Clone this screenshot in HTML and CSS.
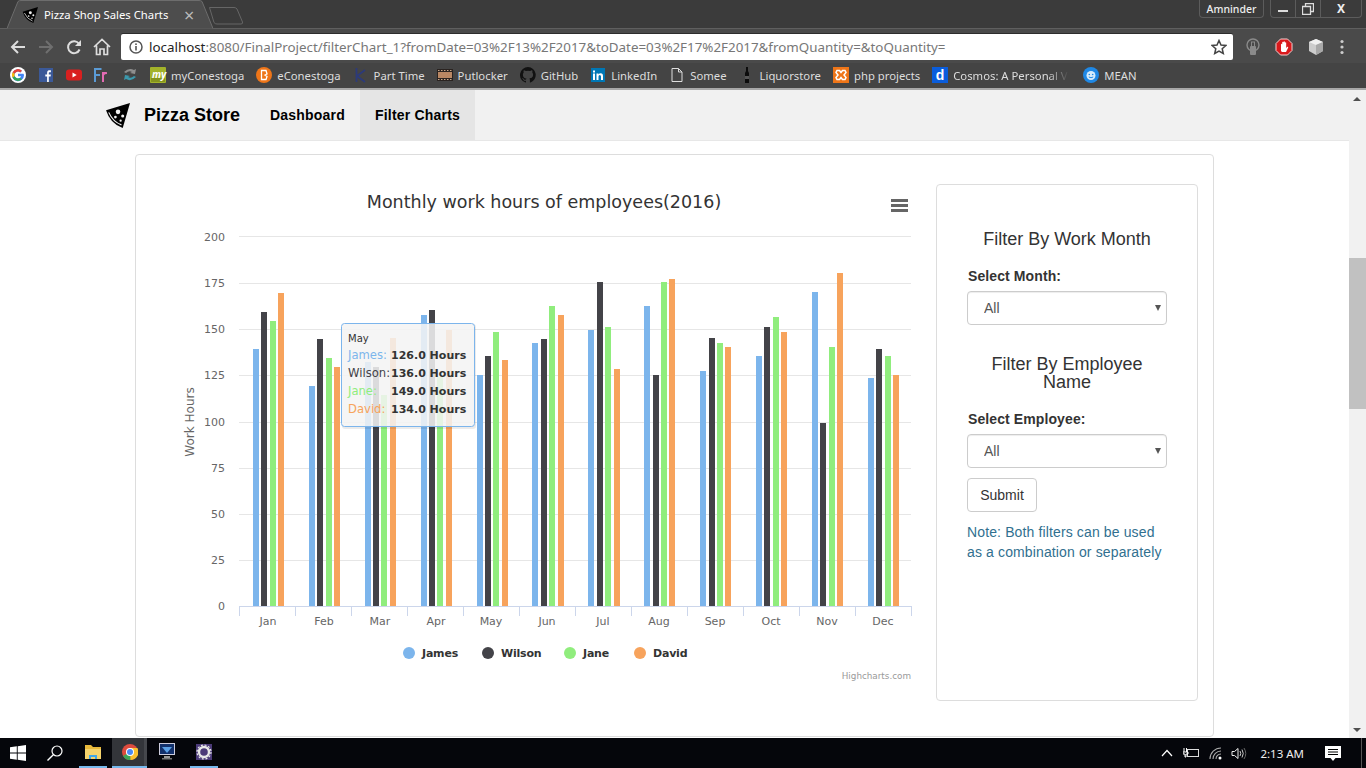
FILE: index.html
```html
<!DOCTYPE html>
<html lang="en">
<head>
    <meta charset="UTF-8">
    <title>Pizza Shop Sales Charts</title>
    <link rel="stylesheet" href="styles.css">
</head>
<body>
    <svg class="defs" width="0" height="0">
        <symbol id="pizza" viewBox="0 0 24 24">
            <path d="M24 0L1 7Q5 20 17 24Z" fill="#000"/>
            <path d="M3.6 9Q7.5 18 15.8 21" fill="none" stroke="#f1f1f1" stroke-width="1.1"/>
            <circle cx="12.5" cy="8.5" r="2.2" fill="#f1f1f1"/>
            <circle cx="17" cy="12.5" r="1.5" fill="#f1f1f1"/>
            <circle cx="10" cy="13.5" r="1.3" fill="#f1f1f1"/>
            <circle cx="15" cy="17" r="1.1" fill="#f1f1f1"/>
        </symbol>
    </svg>

    <!-- browser window -->
    <div class="tabstrip">
        <div class="tab">
            <svg class="tab-shape" width="206" height="29" viewBox="0 0 206 29"><path d="M0 28.500L11 1.500Q12 .5 14 .5H192Q194 .5 195 1.500L206 28.500" fill="#4d4d4d" stroke="#6d6d6d"/></svg>
            <svg class="tab-icon" width="16" height="16"><use href="#pizza"/></svg>
            <span class="tab-title">Pizza Shop Sales Charts</span>
            <span class="tab-close">×</span>
        </div>
        <svg class="newtab" width="36" height="19" viewBox="0 0 36 19"><path d="M1.500 1.500H26Q28 1.500 29 3L34.500 16Q35 18 33 18H9Q7 18 6 16.500Z" fill="#3b3b3b" stroke="#666"/></svg>
        <div class="winbar">
            <span class="user">Amninder</span>
            <div class="winbtns">
                <span class="winbtn"><svg width="12" height="12"><rect x="1" y="7" width="10" height="2" fill="#ddd"/></svg></span>
                <span class="winbtn"><svg width="12" height="12"><path d="M3.500 3.500V.5H11.500V8.500H8.500M.5 3.500H8.500V11.500H.5Z" fill="none" stroke="#ddd" stroke-width="1.300"/></svg></span>
                <span class="winbtn winbtn-close">X</span>
            </div>
        </div>
    </div>

    <div class="toolbar">
        <div class="navbtns">
            <svg width="16" height="16" viewBox="0 0 16 16"><path d="M15 8H2M8 2L2 8l6 6" fill="none" stroke="#ddd" stroke-width="2"/></svg>
            <svg width="16" height="16" viewBox="0 0 16 16"><path d="M1 8h13M8 2l6 6-6 6" fill="none" stroke="#6f6f6f" stroke-width="2"/></svg>
            <svg width="16" height="16" viewBox="0 0 16 16"><path d="M13.600 10.500A6 6 0 1 1 13 4.700" fill="none" stroke="#ddd" stroke-width="2"/><path d="M15 1v6H9z" fill="#ddd"/></svg>
            <svg class="home" width="18" height="18" viewBox="0 0 18 18"><path d="M1 9l8-7.500L17 9M3.500 7.500V16.500H7V11H11V16.500H14.500V7.500" fill="none" stroke="#ddd" stroke-width="1.700"/></svg>
        </div>
        <div class="omnibox">
            <svg class="info" width="14" height="14" viewBox="0 0 14 14"><circle cx="7" cy="7" r="6" fill="none" stroke="#555" stroke-width="1.500"/><rect x="6.200" y="6" width="1.600" height="4.500" fill="#555"/><rect x="6.200" y="3.400" width="1.600" height="1.600" fill="#555"/></svg>
            <span class="url"><span class="url-host">localhost</span>:8080/FinalProject/filterChart_1?fromDate=03%2F13%2F2017&amp;toDate=03%2F17%2F2017&amp;fromQuantity=&amp;toQuantity=</span>
            <svg class="star" width="16" height="16" viewBox="0 0 16 16"><path d="M8 1.500l2 4.500 4.900.5-3.700 3.200 1.100 4.800L8 12l-4.300 2.500 1.100-4.800L1.100 6.500 6 6z" fill="none" stroke="#444" stroke-width="1.500"/></svg>
        </div>
        <div class="extensions">
            <svg width="16" height="18" viewBox="0 0 16 18"><circle cx="8" cy="7" r="6" fill="none" stroke="#8a8a8a" stroke-width="1.400"/><rect x="5" y="8" width="6" height="9" rx="1" fill="#8a8a8a"/><rect x="6.500" y="4" width="3" height="5" fill="none" stroke="#8a8a8a"/></svg>
            <svg width="18" height="18" viewBox="0 0 18 18"><path d="M5.500 1h7L17 5.500v7L12.500 17h-7L1 12.500v-7z" fill="#d8191c" stroke="#f4d0d0"/><path d="M6 13V6.500c0-1 1.200-1 1.200 0V4.500c0-1 1.300-1 1.300 0V4c0-1 1.400-1 1.400 0v.8c0-.9 1.300-.9 1.300 0V10l1-1c.8-.5 1.300.3.8 1L11 14H7z" fill="#fff"/></svg>
            <svg width="18" height="18" viewBox="0 0 18 18"><path d="M9 1l7 3v9l-7 4-7-4V4z" fill="#ccc"/><path d="M9 1l7 3-7 3-7-3z" fill="#f0f0f0"/><path d="M9 7l7-3v9l-7 4z" fill="#a8a8a8"/></svg>
            <svg width="6" height="16" viewBox="0 0 6 16"><circle cx="3" cy="2.500" r="1.600" fill="#ccc"/><circle cx="3" cy="8" r="1.600" fill="#ccc"/><circle cx="3" cy="13.500" r="1.600" fill="#ccc"/></svg>
        </div>
    </div>

    <div class="bookmarks">
        <span class="bm"><svg width="16" height="16" viewBox="0 0 16 16"><circle cx="8" cy="8" r="8" fill="#fff"/><path d="M13.500 6.800H8v2.400h3.100A3.400 3.400 0 1 1 10.200 5.400L12 3.700A6 6 0 1 0 14 8z" fill="#4285f4"/><path d="M2.600 5.200L4.700 6.700A3.500 3.500 0 0 1 10.200 5.400L12 3.700A6 6 0 0 0 2.600 5.200z" fill="#ea4335"/><path d="M2.600 5.200a6 6 0 0 0 0 5.600l2.100-1.600a3.500 3.500 0 0 1 0-2.500z" fill="#fbbc05"/><path d="M2.600 10.800A6 6 0 0 0 12 12.300L10 10.800A3.500 3.500 0 0 1 4.700 9.200z" fill="#34a853"/></svg></span>
        <span class="bm"><svg width="16" height="16" viewBox="0 0 16 16"><rect x="1" y="1" width="14" height="14" fill="#3b5998"/><path d="M10.800 15V9.600h1.800l.3-2.100h-2.100V6.200c0-.6.200-1 1-1h1.100V3.300c-1.800-.2-3.800-.2-3.800 2.500v1.700H7.300v2.100h1.800V15z" fill="#fff"/></svg></span>
        <span class="bm"><svg width="16" height="16" viewBox="0 0 16 16"><rect y="2.500" width="16" height="11" rx="3" fill="#d9201f"/><path d="M6.500 5.500v5L10.700 8z" fill="#fff"/></svg></span>
        <span class="bm"><svg width="16" height="16" viewBox="0 0 16 16"><path d="M1 15V2h6.500M1 8h5" fill="none" stroke="#5b9bd5" stroke-width="2"/><path d="M9 15V6h3M9 8q1-2 4-2" fill="none" stroke="#e36bb2" stroke-width="2"/></svg></span>
        <span class="bm"><svg width="16" height="16" viewBox="0 0 16 16"><path d="M2 5q5-5 10-2l2-1-1 5-5-1 2-1q-3-2-6 1z" fill="#8e8e8e"/><path d="M14 10q-5 5-10 2l-2 1 1-5 5 1-2 1q3 2 6-1z" fill="#3b99ad"/></svg></span>
        <span class="bm"><svg width="16" height="16" viewBox="0 0 16 16"><rect width="16" height="16" rx="1" fill="#a3b32a"/><rect x="1" y="11" width="14" height="4" fill="#85941d"/></svg><i class="my-mark">my</i>myConestoga</span>
        <span class="bm"><svg width="16" height="16" viewBox="0 0 16 16"><circle cx="8" cy="8" r="8" fill="#ee7518"/><path d="M5.500 3.500H10L11 7 9 8 11 9.500 10 12.500H5.500z" fill="none" stroke="#fff" stroke-width="1.300"/></svg>eConestoga</span>
        <span class="bm"><svg width="16" height="16" viewBox="0 0 16 16"><path d="M3.500 1V15M12 3L4 9l8 6" fill="none" stroke="#2c3a7a" stroke-width="1.800"/></svg>Part Time</span>
        <span class="bm"><svg width="16" height="16" viewBox="0 0 16 16"><rect y="2" width="16" height="12" fill="#2a2320"/><rect x="1" y="5" width="14" height="6" fill="#b98763"/><path d="M1 3.500h14M1 12.500h14" stroke="#c9a78a" stroke-dasharray="1.500 1.500"/></svg>Putlocker</span>
        <span class="bm"><svg width="16" height="16" viewBox="0 0 16 16"><path d="M8 0a8 8 0 0 0-2.500 15.600c.4 0 .5-.2.5-.4v-1.400c-2.200.5-2.700-1-2.700-1-.4-.9-.9-1.200-.9-1.200-.7-.5.1-.5.1-.5.8.1 1.200.8 1.200.8.700 1.200 1.900.9 2.300.7.100-.5.300-.9.500-1.100-1.800-.2-3.600-.9-3.600-4 0-.9.300-1.600.8-2.100-.1-.2-.4-1 .1-2.100 0 0 .7-.2 2.200.8a7.500 7.500 0 0 1 4 0c1.500-1 2.200-.8 2.200-.8.400 1.100.2 1.900.1 2.100.5.600.8 1.300.8 2.100 0 3.100-1.900 3.700-3.700 3.900.3.300.5.800.5 1.500v2.200c0 .2.100.5.600.4A8 8 0 0 0 8 0z" fill="#111"/></svg>GitHub</span>
        <span class="bm"><svg width="16" height="16" viewBox="0 0 16 16"><rect x="1" y="1" width="14" height="14" fill="#0077b5"/><path d="M3 6.500h2V13H3zM3 3.500h2v2H3zM6.500 6.500h2v1q.8-1.200 2.200-1.200 2.300 0 2.300 2.700v4h-2V9.500q0-1.500-1.200-1.500-1.300 0-1.300 1.600V13h-2z" fill="#fff"/></svg>LinkedIn</span>
        <span class="bm"><svg width="16" height="16" viewBox="0 0 16 16"><path d="M3 1.500h6.500L13 5v9.500H3zM9.500 1.500V5H13" fill="none" stroke="#ddd"/></svg>Somee</span>
        <span class="bm"><svg width="16" height="16" viewBox="0 0 16 16"><path d="M7 0h2v4l1 2v10H6V6l1-2z" fill="#0c0c0c"/><rect x="6" y="9" width="4" height="3" fill="#555"/></svg>Liquorstore</span>
        <span class="bm"><svg width="16" height="16" viewBox="0 0 16 16"><rect width="16" height="16" fill="#ee7518"/><path d="M4 3.500h2.500L8 5.500l1.500-2H12l1 2-2 2.500 2 2.500-1 2H9.500L8 10.500l-1.500 2H4l-1-2L5 8 3 5.500z" fill="none" stroke="#fff" stroke-width="1.500"/></svg>php projects</span>
        <span class="bm"><svg width="16" height="16" viewBox="0 0 16 16"><rect width="16" height="16" fill="#0a5ddc"/><text x="8" y="13" class="bm-d">d</text></svg><span class="bm-fade">Cosmos: A Personal V</span></span>
        <span class="bm"><svg width="16" height="16" viewBox="0 0 16 16"><circle cx="8" cy="8" r="8" fill="#1f88e5"/><circle cx="8" cy="8.500" r="4.500" fill="#d7ecfb"/><circle cx="6.300" cy="7.500" r=".8" fill="#1f88e5"/><circle cx="9.700" cy="7.500" r=".8" fill="#1f88e5"/><path d="M5.800 10q2.200 1.500 4.400 0" fill="none" stroke="#1f88e5"/></svg>MEAN</span>
    </div>

    <!-- page -->
    <div class="viewport">
        <div class="page">
            <nav class="site-nav">
                <a class="brand"><svg width="25" height="25"><use href="#pizza"/></svg><span>Pizza Store</span></a>
                <a class="nav-link">Dashboard</a>
                <a class="nav-link active">Filter Charts</a>
            </nav>

            <div class="card">
                <svg class="chart" width="790" height="530" viewBox="136 184 790 530">
                    <text class="chart-title" x="544" y="208">Monthly work hours of employees(2016)</text>
                    <path class="menu-icon" d="M891 200.500h17M891 205.500h17M891 210.500h17"/>

                    <path class="grid" d="M239 236.500H911M239 283.500H911M239 329.500H911M239 375.500H911M239 422.500H911M239 468.500H911M239 514.500H911M239 560.500H911"/>
                    <path class="axis" d="M239 606.500H912M239.500 606V616M295.500 606V616M351.500 606V616M407.500 606V616M463.500 606V616M519.500 606V616M575.500 606V616M631.500 606V616M687.500 606V616M743.500 606V616M799.500 606V616M855.500 606V616M911.500 606V616"/>

                    <g class="y-labels">
                        <text x="225" y="241">200</text>
                        <text x="225" y="287">175</text>
                        <text x="225" y="333">150</text>
                        <text x="225" y="379">125</text>
                        <text x="225" y="426">100</text>
                        <text x="225" y="472">75</text>
                        <text x="225" y="518">50</text>
                        <text x="225" y="564">25</text>
                        <text x="225" y="610">0</text>
                    </g>
                    <text class="y-title" transform="translate(194 422) rotate(-90)">Work Hours</text>
                    <g class="x-labels">
                        <text x="268" y="625">Jan</text>
                        <text x="324" y="625">Feb</text>
                        <text x="380" y="625">Mar</text>
                        <text x="436" y="625">Apr</text>
                        <text x="491" y="625">May</text>
                        <text x="547" y="625">Jun</text>
                        <text x="603" y="625">Jul</text>
                        <text x="659" y="625">Aug</text>
                        <text x="715" y="625">Sep</text>
                        <text x="771" y="625">Oct</text>
                        <text x="827" y="625">Nov</text>
                        <text x="883" y="625">Dec</text>
                    </g>

                    <g class="james">
                        <rect x="253" y="349" width="6" height="257"/>
                        <rect x="309" y="386" width="6" height="220"/>
                        <rect x="365" y="362" width="6" height="244"/>
                        <rect x="421" y="315" width="6" height="291"/>
                        <rect x="477" y="375" width="6" height="231"/>
                        <rect x="532" y="343" width="6" height="263"/>
                        <rect x="588" y="330" width="6" height="276"/>
                        <rect x="644" y="306" width="6" height="300"/>
                        <rect x="700" y="371" width="6" height="235"/>
                        <rect x="756" y="356" width="6" height="250"/>
                        <rect x="812" y="292" width="6" height="314"/>
                        <rect x="868" y="378" width="6" height="228"/>
                    </g>
                    <g class="wilson">
                        <rect x="261" y="312" width="6" height="294"/>
                        <rect x="317" y="339" width="6" height="267"/>
                        <rect x="373" y="367" width="6" height="239"/>
                        <rect x="429" y="310" width="6" height="296"/>
                        <rect x="485" y="356" width="6" height="250"/>
                        <rect x="541" y="339" width="6" height="267"/>
                        <rect x="597" y="282" width="6" height="324"/>
                        <rect x="653" y="375" width="6" height="231"/>
                        <rect x="709" y="338" width="6" height="268"/>
                        <rect x="764" y="327" width="6" height="279"/>
                        <rect x="820" y="423" width="6" height="183"/>
                        <rect x="876" y="349" width="6" height="257"/>
                    </g>
                    <g class="jane">
                        <rect x="270" y="321" width="6" height="285"/>
                        <rect x="326" y="358" width="6" height="248"/>
                        <rect x="381" y="395" width="6" height="211"/>
                        <rect x="437" y="377" width="6" height="229"/>
                        <rect x="493" y="332" width="6" height="274"/>
                        <rect x="549" y="306" width="6" height="300"/>
                        <rect x="605" y="327" width="6" height="279"/>
                        <rect x="661" y="282" width="6" height="324"/>
                        <rect x="717" y="343" width="6" height="263"/>
                        <rect x="773" y="317" width="6" height="289"/>
                        <rect x="829" y="347" width="6" height="259"/>
                        <rect x="885" y="356" width="6" height="250"/>
                    </g>
                    <g class="david">
                        <rect x="278" y="293" width="6" height="313"/>
                        <rect x="334" y="367" width="6" height="239"/>
                        <rect x="390" y="338" width="6" height="268"/>
                        <rect x="446" y="330" width="6" height="276"/>
                        <rect x="502" y="360" width="6" height="246"/>
                        <rect x="558" y="315" width="6" height="291"/>
                        <rect x="614" y="369" width="6" height="237"/>
                        <rect x="669" y="279" width="6" height="327"/>
                        <rect x="725" y="347" width="6" height="259"/>
                        <rect x="781" y="332" width="6" height="274"/>
                        <rect x="837" y="273" width="6" height="333"/>
                        <rect x="893" y="375" width="6" height="231"/>
                    </g>

                    <g class="legend">
                        <circle class="james" cx="409" cy="653" r="6"/>
                        <text x="422" y="657">James</text>
                        <circle class="wilson" cx="488" cy="653" r="6"/>
                        <text x="501" y="657">Wilson</text>
                        <circle class="jane" cx="570" cy="653" r="6"/>
                        <text x="583" y="657">Jane</text>
                        <circle class="david" cx="640" cy="653" r="6"/>
                        <text x="653" y="657">David</text>
                    </g>
                    <text class="credits" x="911" y="679">Highcharts.com</text>

                    <g class="tooltip">
                        <rect class="tooltip-shadow" x="342" y="324" width="134" height="105" rx="3"/>
                        <rect class="tooltip-box" x="341.500" y="323.500" width="133" height="103" rx="3"/>
                        <text class="tooltip-head" x="348" y="342">May</text>
                        <text class="t-name t-james" x="348" y="359">James:</text>
                        <text class="t-value" x="391" y="359">126.0 Hours</text>
                        <text class="t-name t-wilson" x="348" y="377">Wilson:</text>
                        <text class="t-value" x="391" y="377">136.0 Hours</text>
                        <text class="t-name t-jane" x="348" y="395">Jane:</text>
                        <text class="t-value" x="391" y="395">149.0 Hours</text>
                        <text class="t-name t-david" x="348" y="413">David:</text>
                        <text class="t-value" x="391" y="413">134.0 Hours</text>
                    </g>
                </svg>

                <form class="filters">
                    <h4>Filter By Work Month</h4>
                    <label>Select Month:</label>
                    <div class="select-wrap">
                        <select><option>All</option></select>
                    </div>
                    <h4 class="second">Filter By Employee Name</h4>
                    <label>Select Employee:</label>
                    <div class="select-wrap">
                        <select><option>All</option></select>
                    </div>
                    <button type="button" class="btn">Submit</button>
                    <p class="note">Note: Both filters can be used as a combination or separately</p>
                </form>
            </div>
        </div>
        <div class="scrollbar">
            <span class="arrow-up"></span>
            <div class="thumb"></div>
            <span class="arrow-down"></span>
        </div>
    </div>

    <!-- windows taskbar -->
    <div class="taskbar">
        <svg class="win-logo" width="16" height="16" viewBox="0 0 16 16"><path d="M0 2.300l6.800-1v6.300H0zM7.700 1.200L16 0v7.600H7.700zM0 8.400h6.800v6.300l-6.800-1zM7.700 8.400H16V16l-8.300-1.200z" fill="#fff"/></svg>
        <svg class="search" width="16" height="16" viewBox="0 0 16 16"><circle cx="10" cy="6" r="5" fill="none" stroke="#fff" stroke-width="1.200"/><path d="M6.300 9.700L.5 15.500" stroke="#fff" stroke-width="1.400"/></svg>
        <span class="task task-open"><svg width="16" height="16" viewBox="0 0 16 16"><path d="M0 1h6l2 2h8v4H0z" fill="#e8b93c"/><path d="M0 5h16v10H0z" fill="#f5d36c"/><path d="M4 15v-4h8v4h-2v-2H6v2z" fill="#41a5e6"/></svg></span>
        <span class="task task-active"><svg width="16" height="16" viewBox="0 0 16 16"><circle cx="8" cy="8" r="8" fill="#dd4b3e"/><path d="M8 8L1 12a8 8 0 0 0 8 4z" fill="#3ba558"/><path d="M8 4h7.400A8 8 0 0 1 8.500 16z" fill="#fbc02d"/><circle cx="8" cy="8" r="4" fill="#fff"/><circle cx="8" cy="8" r="3" fill="#4a8af4"/></svg></span>
        <span class="task"><svg width="16" height="18" viewBox="0 0 16 18"><rect width="16" height="12" fill="#ccd"/><rect x="1" y="1" width="14" height="10" fill="#12306b"/><path d="M3 4h10L8 10z" fill="#5aa0e6"/><rect x="5" y="13" width="6" height="2" fill="#999"/><rect x="3" y="15" width="10" height="1.500" fill="#777"/></svg></span>
        <span class="task task-open"><svg width="16" height="16" viewBox="0 0 16 16"><rect width="16" height="16" fill="#4b3a78"/><circle cx="8" cy="8" r="5" fill="none" stroke="#e8e8e8" stroke-width="2.400"/><circle cx="8" cy="8" r="7" fill="none" stroke="#e8e8e8" stroke-width="1.200" stroke-dasharray="2 1.700"/></svg></span>

        <div class="tray">
            <svg width="12" height="8" viewBox="0 0 12 8"><path d="M1 7l5-5.500L11 7" fill="none" stroke="#fff" stroke-width="1.200"/></svg>
            <svg width="16" height="12" viewBox="0 0 16 12"><rect x="4.500" y="2.500" width="11" height="7" fill="none" stroke="#ddd"/><path d="M1 1v4M3.500 1v4M0 5h5v2H3v3H2V7H0z" fill="none" stroke="#fff"/></svg>
            <svg class="tray-wifi" width="14" height="13" viewBox="0 0 14 13"><path d="M1 12A11 11 0 0 1 12 1M4 12A8 8 0 0 1 12 4M7 12A5 5 0 0 1 12 7" fill="none" stroke="#aaa" stroke-width="1.100"/><circle cx="11" cy="11" r="1.500" fill="#fff"/></svg>
            <svg width="16" height="13" viewBox="0 0 16 13"><path d="M1 4.500h2.500L7 1.500V11.500L3.500 8.500H1z" fill="none" stroke="#eee"/><path d="M9 4q1.500 2.500 0 5M11 2.500q2.500 4 0 8" fill="none" stroke="#ccc"/><path d="M13 1q3.500 5.500 0 11" fill="none" stroke="#666"/></svg>
            <span class="clock">2:13 AM</span>
            <svg class="notif" width="16" height="15" viewBox="0 0 16 15"><path d="M0 0h16v12h-5.500L8 15l-2.500-3H0z" fill="#fff"/><path d="M3 3.500h10M3 6h10M3 8.500h10" stroke="#000"/></svg>
            <span class="show-desktop"></span>
        </div>
    </div>
</body>
</html>
```

FILE: styles.css
```css
* { box-sizing: border-box; }
html, body { height: 100%; }
body { margin: 0; overflow: hidden; display: flex; flex-direction: column; font-family: "Liberation Sans", Arial, sans-serif; font-size: 14px; color: #333; background: #fff; }
svg { display: block; flex: none; }
.defs { position: absolute; }

/* browser window */
.tabstrip { height: 29px; flex: none; display: flex; align-items: flex-start; padding-left: 7px; background: #3b3b3b; border-bottom: 1px solid #5f5f5f; font-family: "Noto Sans", sans-serif; }
.tab { position: relative; width: 206px; height: 29px; display: flex; align-items: center; padding-left: 15px; color: #fff; font-size: 11.300px; }
.tab-shape { position: absolute; left: 0; top: 0; }
.tab-icon, .tab-title, .tab-close { position: relative; }
.tab-title { margin-left: 6px; width: 140px; white-space: nowrap; }
.tab-close { color: #bbb; font-size: 18px; line-height: 1; }
.newtab { margin: 6px 0 0 -5px; }
.winbar { margin-left: auto; display: flex; color: #eee; font-size: 10.500px; }
.user { width: 65px; height: 18px; display: flex; align-items: center; justify-content: center; border: 1px solid #5c5c5c; border-top: none; border-radius: 0 0 4px 4px; font-weight: 500; }
.winbtns { display: flex; margin: 0 4px 0 6px; height: 18px; border: 1px solid #5c5c5c; border-top: none; border-radius: 0 0 4px 4px; }
.winbtn { width: 25px; display: flex; align-items: center; justify-content: center; border-right: 1px solid #5c5c5c; }
.winbtn-close { width: 40px; border-right: none; font-weight: 700; font-size: 12px; }

.toolbar { height: 34px; flex: none; display: flex; align-items: center; background: #4a4a4a; padding-top: 2px; }
.navbtns { width: 121px; display: flex; align-items: center; gap: 12px; padding-left: 10px; }
.home { margin-left: -1px; }
.omnibox { width: 1112px; height: 26px; display: flex; align-items: center; padding: 0 6px 0 8px; background: #fff; border-radius: 2px; box-shadow: 0 -1px 0 #2c2c2c; }
.info { margin-right: 6px; }
.url { flex: 1; font-family: "Noto Sans", sans-serif; font-size: 13.370px; color: #777; white-space: nowrap; overflow: hidden; }
.url-host { color: #222; }
.extensions { flex: 1; display: flex; align-items: center; gap: 14px; padding-left: 12px; }

.bookmarks { height: 27px; flex: none; display: flex; align-items: center; gap: 12px; padding: 0 0 1px 10px; background: #444; border-bottom: 2px solid #a8a8a8; color: #ddd; font-family: "Noto Sans", sans-serif; font-size: 11.300px; }
.bm { position: relative; display: flex; align-items: center; gap: 5px; white-space: nowrap; }
.my-mark { position: absolute; left: 2px; top: 0; color: #fff; font-size: 10px; font-weight: 700; }
.bm-d { font: bold 14px "Liberation Sans", sans-serif; fill: #fff; text-anchor: middle; }
.bm-fade { width: 118px; -webkit-mask-image: linear-gradient(to right, #000 80%, transparent 98%); mask-image: linear-gradient(to right, #000 80%, transparent 98%); }

/* page */
.viewport { flex: 1; min-height: 0; display: flex; }
.page { flex: 1; min-width: 0; overflow: hidden; }
.site-nav { height: 51px; display: flex; align-items: stretch; padding-left: 105px; background: #f1f1f1; border-bottom: 1px solid #e7e7e7; color: #000; font-weight: 700; }
.brand { display: flex; align-items: center; gap: 14px; padding-right: 15px; font-size: 18px; }
.nav-link { display: flex; align-items: center; padding: 0 15px; letter-spacing: .2px; }
.nav-link.active { background: #e5e5e5; }

.card { width: 1079px; height: 583px; margin: 13px auto 0; display: flex; justify-content: space-between; padding: 29px 15px 35px 0; background: #fff; border: 1px solid #ddd; border-radius: 4px; }

.chart text { font-family: "DejaVu Sans", sans-serif; }
.chart-title { font-size: 17.500px; fill: #333; text-anchor: middle; }
.menu-icon { fill: none; stroke: #666; stroke-width: 3; }
.grid { fill: none; stroke: #e6e6e6; }
.axis { fill: none; stroke: #ccd6eb; }
.y-labels text { font-size: 11px; fill: #666; text-anchor: end; }
.x-labels text { font-size: 11px; fill: #666; text-anchor: middle; }
.y-title { font-size: 12px; fill: #666; text-anchor: middle; }
.james { fill: #7cb5ec; }
.wilson { fill: #434348; }
.jane { fill: #90ed7d; }
.david { fill: #f7a35c; }
.legend text { font-size: 11px; font-weight: 700; letter-spacing: -.2px; fill: #333; }
.credits { font-size: 8.800px; fill: #999; text-anchor: end; }
.tooltip-shadow { fill: #000; fill-opacity: .08; }
.tooltip-box { fill: #f7f7f7; fill-opacity: .85; stroke: #7cb5ec; }
.tooltip-head { font-size: 10px; fill: #333; }
.t-name { font-size: 11.600px; }
.t-james { fill: #7cb5ec; }
.t-wilson { fill: #434348; }
.t-jane { fill: #90ed7d; }
.t-david { fill: #f7a35c; }
.t-value { font-size: 11px; fill: #333; font-weight: 700; }

.filters { width: 262px; height: 517px; padding: 45px 30px 0; border: 1px solid #ddd; border-radius: 4px; }
.filters h4 { margin: 0 0 18px; font-size: 18px; font-weight: 400; line-height: 1; text-align: center; }
.filters .second { margin-top: 30px; padding: 0 10px; }
.filters label { display: block; margin: 0 0 5px 1px; font-weight: 700; line-height: 20px; letter-spacing: .1px; }
.select-wrap { position: relative; }
.select-wrap::after { content: ""; position: absolute; right: 6px; top: 14px; border-left: 3.500px solid transparent; border-right: 3.500px solid transparent; border-top: 6px solid #555; }
.select-wrap select { display: block; width: 100%; height: 34px; padding: 6px 12px 6px 16px; appearance: none; -webkit-appearance: none; background: #fff; border: 1px solid #ccc; border-radius: 4px; box-shadow: inset 0 1px 1px rgba(0, 0, 0, .075); font: 14px "Liberation Sans", sans-serif; color: #555; }
.btn { display: block; width: 70px; height: 34px; margin-top: 10px; background: #fff; border: 1px solid #ccc; border-radius: 4px; font: 14px "Liberation Sans", sans-serif; color: #333; }
.note { margin: 10px 0 0; line-height: 20px; color: #31708f; letter-spacing: .13px; }

.scrollbar { width: 17px; flex: none; display: flex; flex-direction: column; align-items: center; padding-top: 168px; position: relative; background: #f1f1f1; }
.thumb { width: 100%; height: 151px; background: #c1c1c1; }
.arrow-up, .arrow-down { position: absolute; left: 4px; border-left: 4.500px solid transparent; border-right: 4.500px solid transparent; }
.arrow-up { top: 7px; border-bottom: 4px solid #505050; }
.arrow-down { bottom: 6px; border-top: 4px solid #505050; }

/* windows taskbar */
.taskbar { height: 30px; flex: none; display: flex; align-items: center; background: #05060b; color: #eee; }
.win-logo { margin-left: 10px; }
.search { margin: 0 16px 0 21px; }
.task { width: 28px; height: 30px; margin-right: 9px; display: flex; align-items: center; justify-content: center; border-bottom: 2px solid transparent; }
.task-open { margin-right: 5px; border-bottom-color: #76b9ed; }
.task-active { width: 35px; margin-right: 6px; background: #33353a; border-bottom-color: #76b9ed; box-shadow: inset -3px 0 0 #45474c; }
.tray { margin-left: auto; display: flex; align-items: center; height: 100%; }
.tray svg { margin-right: 10px; }
.tray .tray-wifi { margin-right: 8px; }
.clock { font-family: "Noto Sans", sans-serif; font-size: 11.500px; margin: 0 21px 0 3px; }
.tray .notif { margin-right: 20px; }
.show-desktop { width: 5px; height: 100%; border-left: 1px solid #555; }
```
